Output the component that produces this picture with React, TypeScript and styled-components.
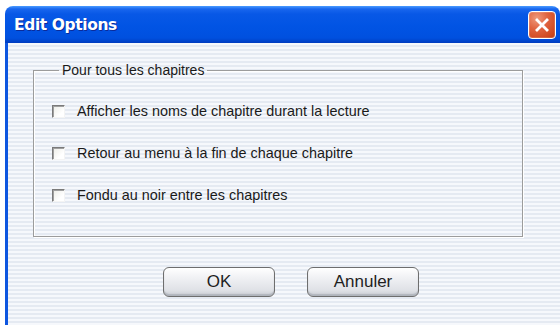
import styled, { createGlobalStyle } from "styled-components";

const Global = createGlobalStyle`
  html, body { margin: 0; padding: 0; background: #fff; overflow: hidden; }
  body { font-family: "Liberation Sans", Arial, sans-serif; }
`;

const Window = styled.div`
  margin: 6px 0 0 5px;
  width: 555px;
  height: 319px;
  display: flex;
  flex-direction: column;
  border-radius: 8px 8px 0 0;
  overflow: hidden;
`;

const TitleBar = styled.div`
  height: 37px;
  flex: none;
  display: flex;
  align-items: center;
  justify-content: space-between;
  padding: 0 4px 0 9px;
  background: linear-gradient(
    to bottom,
    #4a9bff 0px,
    #1866ee 3px,
    #0858e6 8px,
    #0154e4 20px,
    #0050df 32px,
    #003cbf 37px
  );
`;

const Title = styled.span`
  color: #fff;
  font-family: "DejaVu Sans", "Liberation Sans", sans-serif;
  font-weight: bold;
  font-size: 15.5px;
  letter-spacing: -0.4px;
  text-shadow: 1px 1px 0 #0b2b9a;
  padding-top: 1px;
`;

const CloseButton = styled.button`
  width: 28px;
  height: 28px;
  padding: 0;
  border: 1px solid #fff;
  border-radius: 4px;
  background: radial-gradient(circle at 30% 25%, #ef9a7c 0%, #e06440 40%, #cf4820 80%, #b93a12 100%);
  display: flex;
  align-items: center;
  justify-content: center;
  box-shadow: inset 0 0 0 1px rgba(255, 255, 255, 0.15);
`;

const Body = styled.div`
  flex: 1;
  border-left: 3px solid #0d56e0;
  background: repeating-linear-gradient(
    to bottom,
    #f6f8fc 0px,
    #f6f8fc 2px,
    #e5eaf2 2px,
    #e5eaf2 4px
  );
  padding-top: 19px;
`;

const Group = styled.fieldset`
  box-sizing: border-box;
  width: 490px;
  margin: 0 0 0 25px;
  padding: 12px 0 20px 18px;
  border: 1px solid #9c9c9c;
  box-shadow: inset 1px 1px 0 #fff, 1px 1px 0 #fff;
  min-width: 0;
`;

const Legend = styled.legend`
  font-size: 14px;
  line-height: 16px;
  color: #1a1a1a;
  padding: 0 3px;
  margin-left: 7px;
`;

const OptionRow = styled.label`
  height: 42px;
  display: flex;
  align-items: center;
  gap: 12px;
  font-size: 14.4px;
  color: #1a1a1a;
`;

const Check = styled.span`
  width: 13px;
  height: 13px;
  box-sizing: border-box;
  flex: none;
  background: linear-gradient(135deg, #ecece6 0%, #ffffff 70%);
  border-style: solid;
  border-width: 1px;
  border-color: #7a7a7a #f4f4f4 #f4f4f4 #7a7a7a;
  box-shadow: inset 1px 1px 0 #a0a0a0;
`;

const ButtonRow = styled.div`
  display: flex;
  gap: 32px;
  padding: 30px 0 0 155px;
`;

const Button = styled.button`
  width: 112px;
  height: 30px;
  border: 1px solid #6e6e6e;
  border-radius: 6px;
  background: linear-gradient(to bottom, #ffffff 0%, #f0f1f4 35%, #dfe1e6 80%, #c9ccd3 100%);
  box-shadow: inset 0 -2px 1px rgba(150, 155, 165, 0.5), inset 0 1px 0 #fff;
  font-family: "Liberation Sans", Arial, sans-serif;
  font-size: 17px;
  color: #1e1e1e;
  padding: 0;
`;

const options = [
  "Afficher les noms de chapitre durant la lecture",
  "Retour au menu à la fin de chaque chapitre",
  "Fondu au noir entre les chapitres",
];

export default function App() {
  return (
    <>
      <Global />
      <Window>
        <TitleBar>
          <Title>Edit Options</Title>
          <CloseButton aria-label="Fermer">
            <svg width="18" height="18" viewBox="0 0 18 18">
              <path d="M4 4 L14 14 M14 4 L4 14" stroke="#fff" strokeWidth="2.8" strokeLinecap="square" />
            </svg>
          </CloseButton>
        </TitleBar>
        <Body>
          <Group>
            <Legend>Pour tous les chapitres</Legend>
            {options.map((o) => (
              <OptionRow key={o}>
                <Check />
                {o}
              </OptionRow>
            ))}
          </Group>
          <ButtonRow>
            <Button>OK</Button>
            <Button>Annuler</Button>
          </ButtonRow>
        </Body>
      </Window>
    </>
  );
}
